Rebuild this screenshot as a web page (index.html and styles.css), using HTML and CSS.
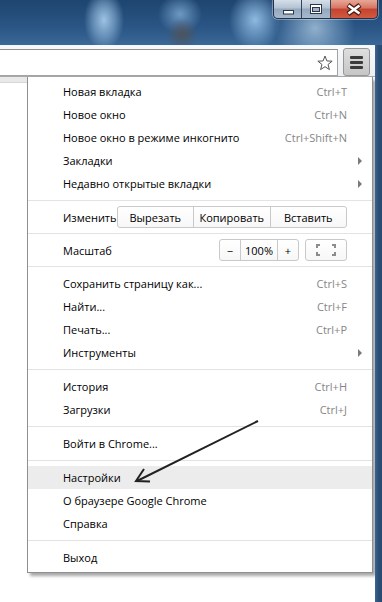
FILE: index.html
```html
<!DOCTYPE html>
<html lang="ru">
<head>
  <meta charset="UTF-8">
  <meta name="viewport" content="width=device-width, initial-scale=1.0">
  <title>Меню Chrome</title>
  <link rel="stylesheet" href="styles.css">
</head>
<body>
  <div class="screen">
    <div class="titlebar">
      <div class="wincontrols">
        <div class="wbtn wbtn-min">
          <svg viewBox="0 0 27 18" width="27" height="18"><rect x="9.5" y="10.5" width="10" height="3.5" fill="#fff" stroke="#2b3544"/></svg>
        </div>
        <div class="wbtn wbtn-max">
          <svg viewBox="0 0 28 18" width="28" height="18"><rect x="8.5" y="4.5" width="11" height="9" fill="#fff" stroke="#2b3544"/><rect x="10.5" y="7.5" width="7" height="4" fill="#9fb2c7" stroke="#2b3544"/></svg>
        </div>
        <div class="wbtn wbtn-close">
          <svg viewBox="0 0 46 18" width="46" height="18"><path d="M17 5 L29 14 M29 5 L17 14" stroke="#4a1a12" stroke-width="5"/><path d="M17.5 5.5 L28.5 13.5 M28.5 5.5 L17.5 13.5" stroke="#fff" stroke-width="2.6"/></svg>
        </div>
      </div>
    </div>

    <div class="window">
      <div class="client">
        <div class="toolbar">
          <div class="omnibox">
            <svg class="star" viewBox="0 0 16 16" width="16" height="16"><polygon points="8,1 9.88,5.91 15.13,6.18 11.04,9.49 12.41,14.57 8,11.7 3.59,14.57 4.96,9.49 0.87,6.18 6.12,5.91" fill="#fff" stroke="#555" stroke-linejoin="round"/></svg>
          </div>
          <div class="menu-btn"><span></span><span></span><span></span></div>
        </div>

        <div class="page">
          <div class="page-left"></div>
          <div class="menu">
            <div class="item"><span class="label">Новая вкладка</span><span class="key">Ctrl+T</span><span class="sub"></span></div>
            <div class="item"><span class="label">Новое окно</span><span class="key">Ctrl+N</span><span class="sub"></span></div>
            <div class="item"><span class="label">Новое окно в режиме инкогнито</span><span class="key">Ctrl+Shift+N</span><span class="sub"></span></div>
            <div class="item"><span class="label">Закладки</span><span class="sub"><i class="tri"></i></span></div>
            <div class="item"><span class="label">Недавно открытые вкладки</span><span class="sub"><i class="tri"></i></span></div>
            <div class="sep"></div>
            <div class="item tool-row">
              <span class="label">Изменить</span>
              <div class="btn-group edit-group">
                <span class="gbtn">Вырезать</span>
                <span class="gbtn">Копировать</span>
                <span class="gbtn">Вставить</span>
              </div>
              <span class="sub"></span>
            </div>
            <div class="sep"></div>
            <div class="item tool-row">
              <span class="label">Масштаб</span>
              <div class="btn-group zoom-group">
                <span class="gbtn zoom-step">−</span>
                <span class="gbtn zoom-value">100%</span>
                <span class="gbtn zoom-step">+</span>
              </div>
              <div class="btn-group fullscreen">
                <svg viewBox="0 0 20 12" width="20" height="12"><path d="M1 4 V1 H4 M16 1 H19 V4 M19 8 V11 H16 M4 11 H1 V8" fill="none" stroke="#8c8c8c" stroke-width="2"/></svg>
              </div>
              <span class="sub"></span>
            </div>
            <div class="sep"></div>
            <div class="item"><span class="label">Сохранить страницу как...</span><span class="key">Ctrl+S</span><span class="sub"></span></div>
            <div class="item"><span class="label">Найти...</span><span class="key">Ctrl+F</span><span class="sub"></span></div>
            <div class="item"><span class="label">Печать...</span><span class="key">Ctrl+P</span><span class="sub"></span></div>
            <div class="item"><span class="label">Инструменты</span><span class="sub"><i class="tri"></i></span></div>
            <div class="sep"></div>
            <div class="item"><span class="label">История</span><span class="key">Ctrl+H</span><span class="sub"></span></div>
            <div class="item"><span class="label">Загрузки</span><span class="key">Ctrl+J</span><span class="sub"></span></div>
            <div class="sep"></div>
            <div class="item"><span class="label">Войти в Chrome...</span><span class="sub"></span></div>
            <div class="sep"></div>
            <div class="item hover"><span class="label">Настройки</span><span class="sub"></span></div>
            <div class="item"><span class="label">О браузере Google Chrome</span><span class="sub"></span></div>
            <div class="item"><span class="label">Справка</span><span class="sub"></span></div>
            <div class="sep"></div>
            <div class="item"><span class="label">Выход</span><span class="sub"></span></div>
          </div>
        </div>
      </div>
      <div class="frame"></div>
    </div>

    <!-- annotation arrow drawn over the menu -->
    <svg class="pointer" viewBox="0 0 382 602" width="382" height="602">
      <path d="M258 421 L137 481" stroke="#222" stroke-width="2" fill="none"/>
      <path d="M144 469 L136 481 L150 481.5" stroke="#222" stroke-width="2" fill="none" stroke-linejoin="miter"/>
    </svg>
  </div>
</body>
</html>
```

FILE: styles.css
```css
body {
  margin: 0;
  font-family: "Open Sans", "Liberation Sans", sans-serif;
  font-size: 11px;
  color: #000;
  background-color: #fff;
}

.screen {
  position: relative;
  width: 382px;
  height: 602px;
  overflow: hidden;
}

/* blurred aero title bar */
.titlebar {
  height: 45px;
  display: flex;
  justify-content: flex-end;
  align-items: flex-start;
  background:
    radial-gradient(ellipse 20px 30px at 104px 20px, rgba(170, 208, 240, 0.9), rgba(170, 208, 240, 0.45) 55%, rgba(170, 208, 240, 0)),
    radial-gradient(ellipse 16px 16px at 182px 34px, rgba(80, 82, 88, 0.9), rgba(80, 82, 88, 0.4) 55%, rgba(80, 82, 88, 0)),
    radial-gradient(ellipse 22px 20px at 180px 14px, rgba(140, 185, 225, 0.7), rgba(140, 185, 225, 0)),
    radial-gradient(ellipse 26px 30px at 255px 20px, rgba(160, 204, 242, 0.85), rgba(160, 204, 242, 0.4) 55%, rgba(160, 204, 242, 0)),
    radial-gradient(ellipse 40px 40px at 315px 28px, rgba(170, 198, 222, 0.8), rgba(150, 185, 215, 0.4) 55%, rgba(150, 185, 215, 0)),
    linear-gradient(#1e456f, #2a5585 60%, #3b6896);
}

.wincontrols {
  display: flex;
  margin-right: 4px;
  border: 1px solid #22324a;
  border-top: none;
  border-radius: 0 0 5px 5px;
  overflow: hidden;
  box-shadow: 0 0 0 1px rgba(255, 255, 255, 0.35);
}

.wbtn {
  height: 18px;
  display: flex;
}

.wbtn-min,
.wbtn-max {
  background: linear-gradient(#d6dfe9, #b3c2d3 45%, #93a7be 50%, #a7b9cd);
  border-right: 1px solid #33445b;
}

.wbtn-close {
  background: linear-gradient(#e9a796, #d67563 45%, #c5432e 50%, #d05a3f);
}

.window {
  display: flex;
  height: 557px;
}

.client {
  width: 375px;
  display: flex;
  flex-direction: column;
}

.frame {
  width: 7px;
  background: linear-gradient(to right, #3f6690, #2c5079 3px, #284a72);
}

/* toolbar with omnibox */
.toolbar {
  height: 32px;
  box-sizing: border-box;
  display: flex;
  align-items: flex-start;
  border-top: 1px solid #f4f8fc;
  border-bottom: 1px solid #a9a9a9;
  background: linear-gradient(#f7f9fb, #eceff2);
}

.omnibox {
  flex: 1;
  height: 27px;
  margin-top: 3px;
  margin-left: -1px;
  border: 1px solid #a3a3a3;
  border-top-color: #8f8f8f;
  background-color: #fff;
  box-sizing: border-box;
  display: flex;
  align-items: center;
  justify-content: flex-end;
  padding-right: 4px;
}

.menu-btn {
  width: 27px;
  height: 28px;
  margin: 2px 5px 0 5px;
  border: 1px solid #979797;
  border-radius: 3px;
  background: linear-gradient(#dedede, #c6c6c6);
  box-sizing: border-box;
  display: flex;
  flex-direction: column;
  align-items: center;
  justify-content: center;
  gap: 2px;
}

.menu-btn span {
  width: 13px;
  height: 3px;
  border-radius: 1px;
  background-color: #3b3b3b;
}

/* page and menu */
.page {
  flex: 1;
  display: flex;
  align-items: flex-start;
  background-color: #fff;
}

.page-left {
  width: 27px;
  height: 5px;
  background-color: #e9e9e9;
  border-bottom: 1px solid #d6d6d6;
}

.menu {
  width: 346px;
  box-sizing: border-box;
  padding: 3px 0;
  background-color: #fff;
  border: 1px solid #8f8f8f;
  border-top: none;
  box-shadow: 3px 3px 3px rgba(0, 0, 0, 0.35);
}

.item {
  display: flex;
  align-items: center;
  height: 23px;
  padding-left: 35px;
  white-space: nowrap;
}

.item.hover {
  background-color: #ececec;
}

.label {
  flex: 1;
}

.key {
  color: #868686;
}

.sub {
  width: 25px;
  flex: none;
  display: flex;
  align-items: center;
}

.tri {
  margin-left: 11px;
  width: 0;
  height: 0;
  border-left: 4px solid #7a7a7a;
  border-top: 4px solid transparent;
  border-bottom: 4px solid transparent;
}

.sep {
  height: 1px;
  margin: 5px 0;
  background-color: #e3e3e3;
}

.tool-row {
  height: 22px;
}

.btn-group {
  display: flex;
  height: 22px;
  border: 1px solid #c9c9c9;
  border-radius: 3px;
  box-sizing: border-box;
  background: linear-gradient(#fff, #f7f7f7);
}

.gbtn {
  display: flex;
  align-items: center;
  justify-content: center;
}

.gbtn + .gbtn {
  border-left: 1px solid #c9c9c9;
}

.edit-group {
  width: 231px;
}

.edit-group .gbtn {
  flex: 1;
}

.zoom-group {
  width: 80px;
}

.zoom-step {
  width: 20px;
}

.zoom-value {
  flex: 1;
}

.fullscreen {
  width: 42px;
  margin-left: 6px;
  align-items: center;
  justify-content: center;
}

.pointer {
  position: absolute;
  top: 0;
  left: 0;
  pointer-events: none;
}
```
